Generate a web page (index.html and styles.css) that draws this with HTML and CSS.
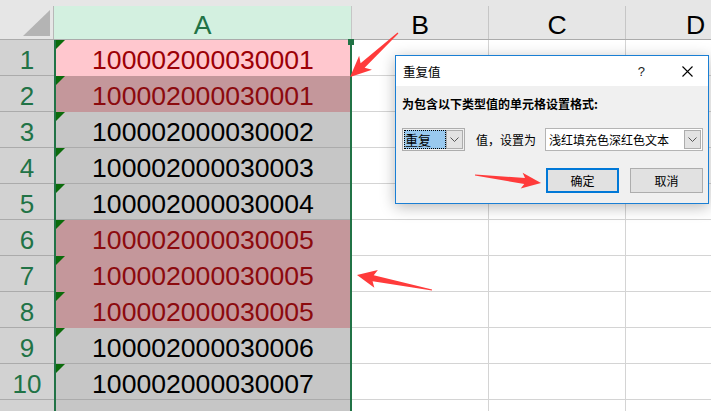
FILE: index.html
```html
<!DOCTYPE html>
<html lang="zh-CN">
<head>
<meta charset="utf-8">
<title>重复值</title>
<link rel="stylesheet" href="styles.css">
</head>
<body>
<div class="sheet">
  <div class="col rowhdr">
    <div class="ch corner"><span><svg width="53" height="33" viewBox="0 0 53 33"><polygon points="50,4 50,30 23,30" fill="#b4b4b4"/></svg></span></div>
    <div class="rh">1</div>
    <div class="rh">2</div>
    <div class="rh">3</div>
    <div class="rh">4</div>
    <div class="rh">5</div>
    <div class="rh">6</div>
    <div class="rh">7</div>
    <div class="rh">8</div>
    <div class="rh">9</div>
    <div class="rh">10</div>
    <div class="rh"></div>
  </div>
  <div class="col colA">
    <div class="ch"><span>A</span></div>
    <div class="abody">
      <div class="cell flag active">100002000030001</div>
      <div class="cell flag dup">100002000030001</div>
      <div class="cell flag">100002000030002</div>
      <div class="cell flag">100002000030003</div>
      <div class="cell flag">100002000030004</div>
      <div class="cell flag dup">100002000030005</div>
      <div class="cell flag dup">100002000030005</div>
      <div class="cell flag dup">100002000030005</div>
      <div class="cell flag">100002000030006</div>
      <div class="cell flag">100002000030007</div>
      <div class="cell"></div>
      <i class="handle"></i>
    </div>
  </div>
  <div class="col colB">
    <div class="ch"><span>B</span></div>
    <div class="gc"></div><div class="gc"></div><div class="gc"></div><div class="gc"></div><div class="gc"></div><div class="gc"></div><div class="gc"></div><div class="gc"></div><div class="gc"></div><div class="gc"></div><div class="gc"></div>
  </div>
  <div class="col colC">
    <div class="ch"><span>C</span></div>
    <div class="gc"></div><div class="gc"></div><div class="gc"></div><div class="gc"></div><div class="gc"></div><div class="gc"></div><div class="gc"></div><div class="gc"></div><div class="gc"></div><div class="gc"></div><div class="gc"></div>
  </div>
  <div class="col colD">
    <div class="ch"><span>D</span></div>
    <div class="gc"></div><div class="gc"></div><div class="gc"></div><div class="gc"></div><div class="gc"></div><div class="gc"></div><div class="gc"></div><div class="gc"></div><div class="gc"></div><div class="gc"></div><div class="gc"></div>
  </div>
</div>

<div class="dialog">
  <div class="dtitle">
    <span class="dt">重复值</span>
    <span class="help">?</span>
    <svg class="close" width="11" height="11" viewBox="0 0 11 11"><path d="M0.5 0.5 L10.5 10.5 M10.5 0.5 L0.5 10.5" stroke="#000" stroke-width="1.1" fill="none"/></svg>
  </div>
  <div class="dbody">
    <div class="dlabel">为包含以下类型值的单元格设置格式:</div>
    <div class="drow">
      <div class="sel sel1">
        <span class="selval">重复</span>
        <span class="dd"><svg width="9" height="5" viewBox="0 0 9 5"><path d="M0.5 0.5 L4.5 4.5 L8.5 0.5" stroke="#555" stroke-width="1" fill="none"/></svg></span>
      </div>
      <span class="mid">值，设置为</span>
      <div class="sel sel2">
        <span class="selval2">浅红填充色深红色文本</span>
        <span class="dd"><svg width="9" height="5" viewBox="0 0 9 5"><path d="M0.5 0.5 L4.5 4.5 L8.5 0.5" stroke="#555" stroke-width="1" fill="none"/></svg></span>
      </div>
    </div>
    <div class="dbtns">
      <button class="btn primary">确定</button>
      <button class="btn">取消</button>
    </div>
  </div>
</div>

<svg class="arrows" width="711" height="411" viewBox="0 0 711 411">
  <g fill="#ff3b3b">
    <polygon transform="translate(398 33) rotate(137.5)" points="0,-0.6 48,-3 44,-9.5 65,0 44,9.5 48,3 0,0.6"/>
    <polygon transform="translate(432 290) rotate(191.3)" points="0,-0.6 60,-3 57,-9 76.5,0 57,9 60,3 0,0.6"/>
    <polygon transform="translate(475 175) rotate(6.9)" points="0,-0.6 50,-3 47,-8 66.5,0 47,8 50,3 0,0.6"/>
  </g>
</svg>
</body>
</html>
```

FILE: styles.css
```css
* { box-sizing: border-box; }

body {
  margin: 0;
  width: 711px;
  height: 411px;
  overflow: hidden;
  position: relative;
  background: #fff;
  font-family: "Liberation Sans", Arial, sans-serif;
}

.sheet {
  display: flex;
  width: 711px;
  height: 411px;
  overflow: hidden;
}

.col {
  display: flex;
  flex-direction: column;
  flex: none;
}

.rowhdr { width: 54px; }
.colA { width: 298px; }
.colB, .colC { width: 137px; }
.colD { width: 140px; }

.ch {
  height: 40px;
  flex: none;
  padding-top: 6px;
  background: #e6e6e6;
  border-bottom: 1px solid #ababab;
}

.ch span {
  display: block;
  height: 33px;
  border-right: 1px solid #c6c6c6;
  text-align: center;
  font-size: 26.6px;
  line-height: 28px;
  padding-top: 5px;
  color: #000;
}

.corner span {
  padding-top: 0;
  border-right-color: #b8b8b8;
}

.corner svg { display: block; }

.colA .ch span {
  background: #d3f0e0;
  color: #217346;
}

.rh {
  height: 36px;
  flex: none;
  background: #d2d2d2;
  border-bottom: 1px solid #ababab;
  text-align: center;
  font-size: 26px;
  line-height: 32px;
  padding-top: 4px;
  color: #217346;
}

.abody {
  flex: 1;
  position: relative;
  border-left: 2px solid #217346;
  border-right: 2px solid #217346;
  background: #c6c6c6;
}

.cell {
  height: 36px;
  position: relative;
  background: #c6c6c6;
  border-bottom: 1px solid #ababab;
  text-align: center;
  font-size: 26.6px;
  line-height: 32px;
  padding-top: 4px;
  color: #000;
}

.cell.flag::before {
  content: "";
  position: absolute;
  left: 0;
  top: 0;
  width: 0;
  height: 0;
  border-style: solid;
  border-width: 9px 9px 0 0;
  border-color: #0b6b0b transparent transparent transparent;
}

.cell.dup {
  background: #c4979b;
  border-bottom-color: #c4979b;
  color: #8c0a0e;
}

.cell.active {
  background: #ffc7ce;
  border-bottom-color: #ffc7ce;
  color: #9c0006;
}

.handle {
  position: absolute;
  right: -4px;
  top: -1px;
  width: 6px;
  height: 6px;
  background: #217346;
}

.gc {
  height: 36px;
  flex: none;
  border-bottom: 1px solid #d4d4d4;
  border-right: 1px solid #d4d4d4;
}

/* dialog */
.dialog {
  position: absolute;
  left: 395px;
  top: 55px;
  width: 314px;
  height: 149px;
  border: 1px solid #1a7fd4;
  background: #f0f0f0;
  box-shadow: 0 3px 14px rgba(0, 0, 0, 0.28);
  font-family: "Noto Sans CJK SC", "Noto Sans", sans-serif;
  font-size: 12px;
  color: #000;
}

.dtitle {
  height: 30px;
  background: #fff;
  display: flex;
  align-items: center;
  padding-left: 7px;
}

.dt { font-size: 12.5px; }

.help {
  margin-left: auto;
  font-family: "Liberation Sans", Arial, sans-serif;
  font-size: 13px;
  color: #222;
}

.close {
  margin-left: 37px;
  margin-right: 15px;
  display: block;
}

.dbody {
  padding: 10px 5px 0 6px;
}

.dlabel {
  font-weight: bold;
  line-height: 16px;
  height: 16px;
}

.drow {
  margin-top: 16px;
  height: 23px;
  display: flex;
  align-items: center;
}

.sel {
  height: 23px;
  display: flex;
  align-items: stretch;
  border: 1px solid #adadad;
  padding: 1px;
}

.sel1 {
  width: 63px;
  background: #f0f0f0;
}

.sel2 {
  width: 158px;
  margin-left: auto;
  background: #fff;
  border-color: #b4b4b4;
}

.selval {
  width: 42px;
  background: #99c9ef;
  outline: 1px dotted #000;
  outline-offset: -1px;
  font-size: 13px;
  line-height: 19px;
  padding-left: 1px;
}

.selval2 {
  flex: 1;
  line-height: 19px;
  padding-left: 2px;
}

.dd {
  width: 17px;
  margin-left: auto;
  background: #e3e3e3;
  border: 1px solid #adadad;
  display: flex;
  align-items: center;
  justify-content: center;
}

.mid {
  margin-left: 11px;
}

.dbtns {
  margin-top: 17px;
  display: flex;
  justify-content: flex-end;
  gap: 11px;
}

.btn {
  width: 73px;
  height: 25px;
  background: #e1e1e1;
  border: 1px solid #adadad;
  font-family: "Noto Sans CJK SC", "Noto Sans", sans-serif;
  font-size: 12px;
  color: #000;
  padding: 0;
}

.btn.primary {
  border: 2px solid #0078d7;
}

.arrows {
  position: absolute;
  left: 0;
  top: 0;
  pointer-events: none;
}
```
